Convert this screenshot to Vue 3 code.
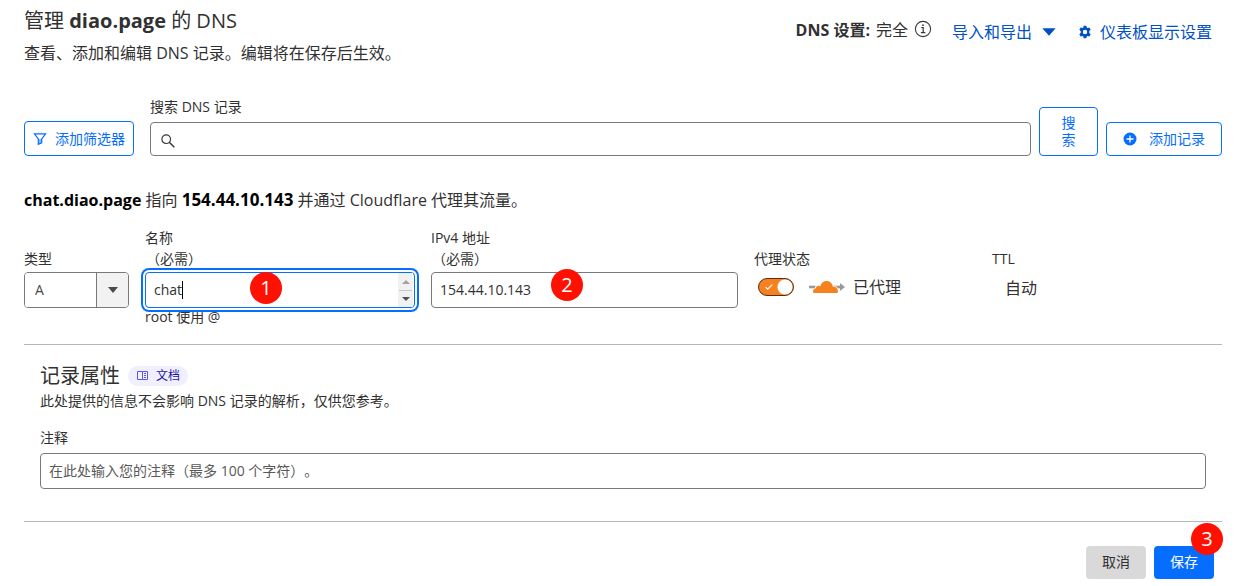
<script setup>
import { ref } from 'vue'

const query = ref('')
const type = ref('A')
const name = ref('chat')
const address = ref('154.44.10.143')
const proxied = ref(true)
const comment = ref('')
</script>

<template>
  <main class="page">
    <header class="header">
      <div>
        <h1 class="title">管理 <strong>diao.page</strong> 的 DNS</h1>
        <p class="subtitle">查看、添加和编辑 DNS 记录。编辑将在保存后生效。</p>
      </div>
      <div class="tools">
        <div class="setup">
          <strong>DNS 设置:</strong>
          <span>完全</span>
          <svg class="info" width="18" height="18" viewBox="0 0 18 18" fill="none" stroke="#36393a" aria-hidden="true">
            <circle cx="9" cy="9" r="7.6" stroke-width="1.1" />
            <path d="M7.3 7.6h1.9v4.9M6.9 12.6h4.4" stroke-width="1.2" />
            <circle cx="9" cy="5.2" r=".9" fill="#36393a" stroke="none" />
          </svg>
        </div>
        <a href="#" class="link">导入和导出
          <svg width="14" height="8" viewBox="0 0 14 8" aria-hidden="true"><path d="M.3.3h13.4L7 7.7z" fill="currentColor" /></svg>
        </a>
        <a href="#" class="link settings">
          <svg width="14" height="14" viewBox="0 0 14 14" aria-hidden="true">
            <path fill="currentColor" fill-rule="evenodd" d="M5.700.8h2.600l.4 1.800.9.500 1.700-.6 1.400 2.300-1.400 1.300v1.800l1.400 1.300-1.400 2.300-1.700-.6-.9.500-.4 1.800H5.700l-.4-1.800-.9-.5-1.700.6-1.400-2.300 1.400-1.300V6.100L1.300 4.800l1.400-2.300 1.700.6.9-.5zM7 4.800a2.200 2.200 0 1 0 0 4.400 2.200 2.200 0 0 0 0-4.400z" />
          </svg>
          仪表板显示设置</a>
      </div>
    </header>

    <form class="search" @submit.prevent>
      <button type="button" class="btn outline filter">
        <svg width="14" height="14" viewBox="0 0 14 14" aria-hidden="true">
          <path d="M1.400 1.800h11.200L8.700 7v3.800l-3.400 1.500V7z" fill="none" stroke="currentColor" stroke-width="1.200" />
          <path d="M5.300 7h3.400v3.800l-3.400 1.500z" fill="currentColor" fill-opacity=".45" />
        </svg>
        添加筛选器
      </button>
      <div class="search-field">
        <label for="query">搜索 DNS 记录</label>
        <div class="search-box">
          <svg width="14" height="14" viewBox="0 0 14 14" fill="none" stroke="#36393a" aria-hidden="true">
            <circle cx="5.200" cy="5.200" r="4.300" stroke-width="1.200" />
            <path d="M8.300 8.300l5 5" stroke-width="1.500" />
          </svg>
          <input id="query" v-model="query" type="text">
        </div>
      </div>
      <button type="submit" class="btn outline find">搜<br>索</button>
      <button type="button" class="btn outline add">
        <svg width="14" height="14" viewBox="0 0 14 14" aria-hidden="true">
          <circle cx="7" cy="7" r="6.500" fill="currentColor" />
          <path d="M7 3.500v7M3.500 7h7" stroke="#fff" stroke-width="1.300" />
        </svg>
        添加记录
      </button>
    </form>

    <p class="summary"><strong>chat.diao.page</strong> 指向 <strong class="ip">154.44.10.143</strong> 并通过 Cloudflare 代理其流量。</p>

    <section class="fields">
      <div>
        <label class="caption" for="type">类型</label>
        <div class="select">
          <select id="type" v-model="type"><option>A</option><option>AAAA</option><option>CNAME</option></select>
          <span class="arrow"><svg width="10" height="6" viewBox="0 0 10 6" aria-hidden="true"><path d="M0 0h10L5 6z" fill="#4a4a4a" /></svg></span>
        </div>
      </div>
      <div>
        <label class="caption" for="name"><span>名称</span><span class="required">（必需）</span></label>
        <div class="control">
          <input id="name" v-model="name" type="text" class="focused">
          <span class="caret"></span>
          <span class="spinner">
            <svg width="8" height="4" viewBox="0 0 8 4" aria-hidden="true"><path d="M0 4h8L4 0z" fill="#a3a3a3" /></svg>
            <svg width="8" height="4" viewBox="0 0 8 4" aria-hidden="true"><path d="M0 0h8L4 4z" fill="#505050" /></svg>
          </span>
          <span class="badge one">1</span>
        </div>
        <p class="help">root 使用 @</p>
      </div>
      <div>
        <label class="caption" for="address"><span>IPv4 地址</span><span class="required">（必需）</span></label>
        <div class="control">
          <input id="address" v-model="address" type="text">
          <span class="badge two">2</span>
        </div>
      </div>
      <div>
        <label class="caption" for="proxy">代理状态</label>
        <div class="proxy">
          <span class="toggle">
            <input id="proxy" v-model="proxied" type="checkbox" role="switch">
            <svg width="8" height="6" viewBox="0 0 8 6" fill="none" stroke="#fff" stroke-width="1.200" aria-hidden="true"><path d="M.6 3.200l2 2L7.300.6" /></svg>
          </span>
          <svg class="cloud" width="36" height="14" viewBox="0 0 36 14" aria-hidden="true">
            <path d="M0 7h32" stroke="#999" stroke-width="2.600" />
            <path d="M31 3l5 4-5 4z" fill="#999" />
            <path d="M3 13.500q-1-4 3-6 1-4 4.500-3.300Q13 .2 17.600.2c4 0 6.300 2.400 7 5.600 3.100.2 5.300 2.600 5.300 7.700z" fill="#fff" />
            <path d="M5.500 13q-1.500 0-1.500-1.500 0-2.800 3-3.200-.1-2.300 2-2.600 1.300-.1 2.200.7C12.100 3 14.500 1 17.600 1c3.400 0 5.800 2.300 6.200 5.600 3.100-.1 5 1.700 5.200 5 0 .8-.4 1.400-1.200 1.400z" fill="#f6821f" />
          </svg>
          <span>已代理</span>
        </div>
      </div>
      <div>
        <span class="caption">TTL</span>
        <div class="ttl">自动</div>
      </div>
    </section>

    <section class="attributes">
      <div class="attributes-head">
        <h2>记录属性</h2>
        <a href="#" class="docs">
          <svg width="11" height="10" viewBox="0 0 11 10" fill="none" stroke="#6152e8" aria-hidden="true"><path d="M.5.500h5v8H.5zM5.500.500h5v8h-5M7 2.500h2M7 4.500h2M7 6.500h2" /></svg>
          文档</a>
      </div>
      <p class="note">此处提供的信息不会影响 DNS 记录的解析，仅供您参考。</p>
      <label for="comment">注释</label>
      <input id="comment" v-model="comment" type="text" placeholder="在此处输入您的注释（最多 100 个字符）。">
    </section>

    <footer class="actions">
      <button type="button" class="btn cancel">取消</button>
      <div class="save-wrap">
        <button type="button" class="btn save">保存</button>
        <span class="badge three">3</span>
      </div>
    </footer>
  </main>
</template>

<style>
body { background: #fff; }
</style>

<style scoped>
* { box-sizing: border-box; }
.page {
  padding: 5px 21px 7px 24px;
  color: #313131;
  font: 14px/20px "Open Sans", "Noto Sans CJK SC", sans-serif;
  text-spacing-trim: space-all;
}
h1, h2, p { margin: 0; font-weight: 400; }
svg { flex: none; display: block; }
input, select, button { font: inherit; color: inherit; text-spacing-trim: inherit; }
input {
  width: 100%;
  height: 36px;
  padding: 0 8px 2px;
  border: 1px solid #797979;
  border-radius: 4px;
  background: #fff;
  outline: none;
}
input::placeholder { color: #595959; opacity: 1; }

.header { display: flex; justify-content: space-between; }
.title { font-size: 20px; line-height: 32px; }
.subtitle { margin-top: 4px; font-size: 16px; line-height: 24px; }
.tools { display: flex; align-items: flex-start; padding: 13px 10px 0 0; font-size: 16px; line-height: 24px; }
.setup { display: flex; gap: 6px; margin-right: 20px; }
.info { margin-top: 2px; }
.link { display: flex; align-items: center; gap: 10px; margin-top: 2px; color: #0051c3; text-decoration: none; }
.settings { gap: 8px; margin-left: 22px; }

.btn {
  display: flex;
  align-items: center;
  justify-content: center;
  height: 34px;
  padding: 0 15px;
  border: 0;
  border-radius: 4px;
  white-space: nowrap;
}
.outline { border: 1px solid #056dff; background: #fff; color: #056dff; }
.search { display: flex; align-items: flex-end; margin-top: 32px; }
.filter { gap: 8px; height: 35px; width: 110px; padding: 0 7px; margin-right: 16px; }
.search-field { flex: 1; }
.search-field label { display: block; margin-bottom: 5px; }
.search-box { position: relative; }
.search-box input { display: block; height: 34px; padding-left: 32px; }
.search-box svg { position: absolute; left: 11px; top: 12px; }
.find { width: 59px; height: 49px; margin: 0 8px; padding-bottom: 2px; line-height: 17px; }
.add { width: 116px; gap: 12px; }

.summary { margin-top: 32px; font-size: 16px; line-height: 24px; }
.summary strong { color: #000; }
.summary .ip { font-size: 17px; }

.fields {
  display: grid;
  grid-template-columns: 105px 270fr 307fr 222fr 230fr;
  gap: 16px;
  margin-top: 16px;
  padding-bottom: 18px;
  border-bottom: 1px solid #b6b6b6;
}
.caption { display: flex; flex-direction: column; justify-content: flex-end; height: 44px; padding-bottom: 3px; line-height: 21px; }
.required { margin-left: 1px; }
.select { display: flex; height: 36px; border: 1px solid #797979; border-radius: 4px; overflow: hidden; }
.select select { flex: 1; min-width: 0; padding: 0 10px; border: 0; background: #fff; appearance: none; outline: none; color: #4a4a4a; }
.arrow { display: grid; place-items: center; width: 32px; border-left: 1px solid #797979; background: #f2f2f2; }
.control { position: relative; height: 36px; }
.control input { display: block; }
.control .focused { border-color: #056dff; box-shadow: 0 0 0 2px #fff, 0 0 0 4px #056dff; }
.caret { position: absolute; left: 37px; top: 9px; width: 1px; height: 18px; background: #000; }
.spinner {
  position: absolute;
  top: 1px;
  right: 2px;
  bottom: 1px;
  display: grid;
  place-items: center;
  width: 15px;
  background: linear-gradient(#c8c8c8, #c8c8c8) center / 13px 1px no-repeat #f1f1f1;
}
.help { height: 18px; line-height: 18px; }
.badge {
  position: absolute;
  width: 32px;
  height: 32px;
  border-radius: 50%;
  background: #ff1000;
  color: #fff;
  font-size: 20px;
  line-height: 32px;
  text-align: center;
}
.one { left: 105px; top: 0; }
.two { left: 120px; top: -3px; }
.three { right: -9px; top: -23px; }
.proxy { display: flex; align-items: center; height: 30px; padding-left: 4px; font-size: 16px; line-height: 24px; }
.toggle { position: relative; width: 36px; height: 18px; margin-right: 15px; }
.toggle input { display: block; height: 18px; margin: 0; padding: 0; border: 1px solid #5c2c12; border-radius: 9px; background: radial-gradient(circle at 26px 8px, #fff 7px, #f6821f 8px); appearance: none; }
.toggle svg { position: absolute; left: 7px; top: 6px; }
.cloud { margin-right: 8px; }
.ttl { padding: 4px 0 0 13px; font-size: 16px; line-height: 24px; }

.attributes { padding: 15px 16px 32px; border-bottom: 1px solid #b6b6b6; }
.attributes-head { display: flex; align-items: center; gap: 8px; height: 32px; }
h2 { font-size: 20px; line-height: 32px; }
.docs { display: flex; align-items: center; gap: 8px; height: 20px; padding: 0 8px 0 9px; border-radius: 10px; background: #f0efff; color: #2314a3; font-size: 12px; text-decoration: none; }
.note { line-height: 18px; }
.attributes label { display: block; margin: 18px 0 5px; }
.attributes input { display: block; }

.actions { display: flex; justify-content: flex-end; gap: 8px; padding: 24px 8px 0 0; }
.actions .btn { width: 60px; height: 33px; padding-bottom: 1px; }
.cancel { background: #d9d9d9; }
.save-wrap { position: relative; }
.save { background: #056dff; color: #fff; }
</style>
